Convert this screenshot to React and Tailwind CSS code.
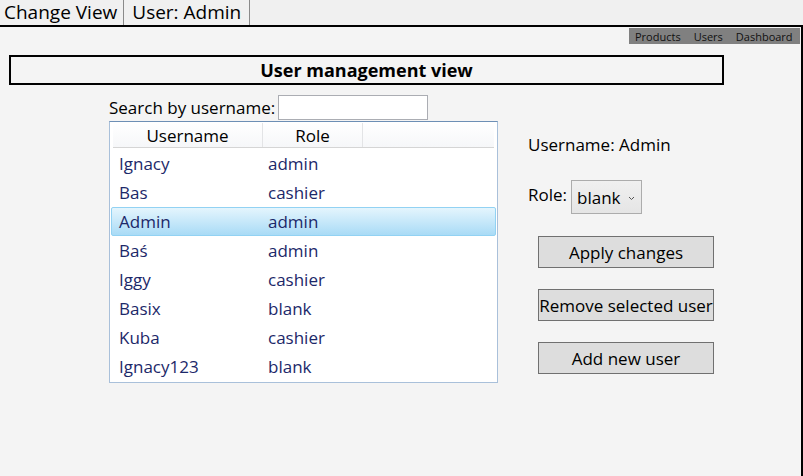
const users = [
  { name: 'Ignacy', role: 'admin' },
  { name: 'Bas', role: 'cashier' },
  { name: 'Admin', role: 'admin', selected: true },
  { name: 'Baś', role: 'admin' },
  { name: 'Iggy', role: 'cashier' },
  { name: 'Basix', role: 'blank' },
  { name: 'Kuba', role: 'cashier' },
  { name: 'Ignacy123', role: 'blank' },
];

function ActionButton({ children }) {
  return (
    <button className="w-[176px] h-[32px] bg-[#dddddd] border border-[#707070] text-[17px] text-black flex items-center justify-center leading-none">
      {children}
    </button>
  );
}

export default function App() {
  return (
    <div className="w-[803px] h-[476px] bg-[#f4f4f4] flex flex-col overflow-hidden font-['Open_Sans',sans-serif] text-black">

      {/* menu */}
      <div className="h-[25px] flex items-stretch bg-[#f0f0f0]">
        <div className="pl-[4px] pr-[6px] flex items-center text-[19px] leading-none border-r border-[#8a8a8a]">Change View</div>
        <div className="pl-[8px] pr-[8px] flex items-center text-[19px] leading-none border-r border-[#8a8a8a]">User: Admin</div>
      </div>

      {/* main */}
      <div className="flex-1 flex flex-col border-t-2 border-r-2 border-black">
        <div className="flex justify-end">
          <nav className="mt-px mr-px h-[16px] w-[171px] bg-[#808080] flex items-center gap-[13px] pl-[6px] text-[11px] leading-none text-[#111]">
            <span>Products</span>
            <span>Users</span>
            <span>Dashboard</span>
          </nav>
        </div>

        <div className="ml-[9px] mt-[11px] w-[715px] h-[30px] border-2 border-black flex items-center justify-center text-[18px] font-bold leading-none">
          User management view
        </div>

        <div className="flex pl-[109px] mt-[10px]">
          {/* left column */}
          <div className="w-[389px] flex flex-col">
            <div className="flex items-center h-[25px]">
              <span className="text-[17px] leading-none">Search by username:</span>
              <input className="ml-[3px] w-[150px] h-[25px] bg-white border border-[#abadb3] outline-none" />
            </div>
            <div className="mt-px h-[262px] bg-white border border-[#a9c0da] border-t-[#6d8fb5] p-px flex flex-col">
              <div className="h-[27px] ml-[2px] mr-[2px] flex border-b border-[#d5d5d5] bg-gradient-to-b from-white to-[#f6f7f9] text-[17px] leading-none">
                <div className="w-[150px] flex items-center justify-center border-r border-[#e3e4e6]">Username</div>
                <div className="w-[100px] flex items-center justify-center border-r border-[#e3e4e6]">Role</div>
                <div className="flex-1" />
              </div>
              <div className="flex flex-col pt-px">
                {users.map((u) => (
                  <div
                    key={u.name}
                    className={`h-[29px] flex items-center text-[17px] leading-none text-[#1c2869] ${
                      u.selected
                        ? 'bg-gradient-to-b from-[#e4f5fd] to-[#a9dbf6] border border-[#92d2f3] rounded-[2px]'
                        : 'border border-transparent'
                    }`}
                  >
                    <span className="w-[150px] pl-[7px]">{u.name}</span>
                    <span className="pl-[6px]">{u.role}</span>
                  </div>
                ))}
              </div>
            </div>
          </div>

          {/* right column */}
          <div className="ml-[30px] flex flex-col">
            <div className="mt-[38px] text-[17px] leading-[24px]">Username: Admin</div>
            <div className="mt-[23px] flex items-center">
              <span className="text-[17px] leading-none mb-[5px]">Role:</span>
              <div className="ml-[4px] w-[71px] h-[34px] border border-[#acacac] bg-gradient-to-b from-[#f0f0f0] to-[#e5e5e5] flex items-center pl-[5px] pr-[6px] justify-between">
                <span className="text-[17px] leading-none">blank</span>
                <svg width="7" height="5" viewBox="0 0 7 5" className="mt-[2px]">
                  <path d="M1 1l2.5 2.5L6 1" fill="none" stroke="#555" strokeWidth="1" />
                </svg>
              </div>
            </div>
            <div className="ml-[10px] mt-[22px] flex flex-col gap-[21px]">
              <ActionButton>Apply changes</ActionButton>
              <ActionButton>Remove selected user</ActionButton>
              <ActionButton>Add new user</ActionButton>
            </div>
          </div>
        </div>
      </div>
    </div>
  );
}
